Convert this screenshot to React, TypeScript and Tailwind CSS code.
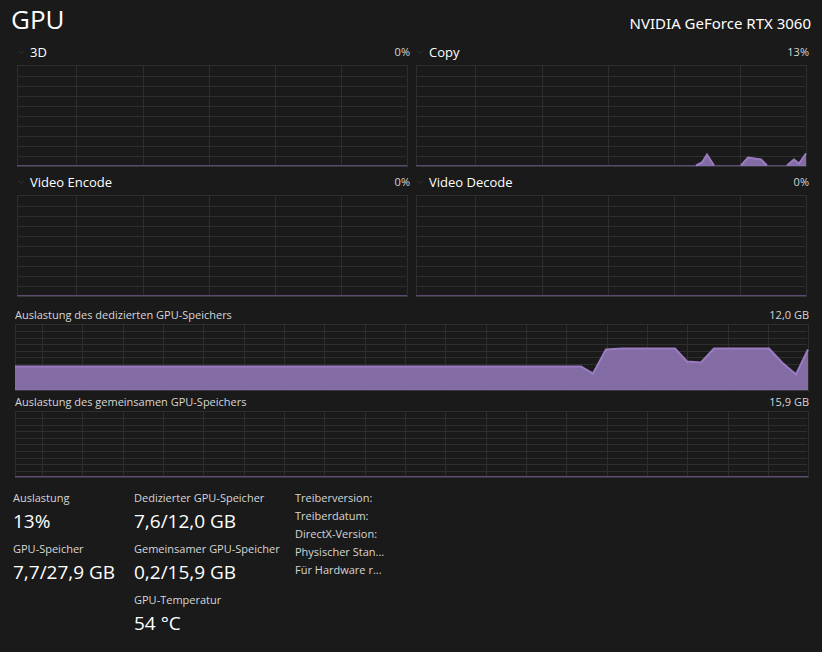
import React from 'react';
import { ChevronDown } from 'lucide-react';

type Point = [number, number];

interface GraphProps {
  width: number;
  height: number;
  columns: number[];
  rows: number[];
  series?: Point[][];
  className: string;
}

const ENGINE_COLUMNS = [59, 126, 192, 258, 324];
const ENGINE_ROWS = [11, 21, 31, 41, 51, 61, 71, 81, 91];

const MEMORY_COLUMNS = Array.from({ length: 19 }, (_, i) => Math.round(27 + i * 40.33));
const MEMORY_ROWS = Array.from({ length: 9 }, (_, i) => Math.ceil((i + 1) * 6.6));

const COPY_SERIES: Point[][] = [
  [[280, 100], [286, 97], [291, 89], [298, 100]],
  [[325, 100], [332, 92], [345, 94], [351, 100]],
  [[371, 100], [378, 94], [383, 98], [390, 88]],
];

const DEDICATED_SERIES: Point[][] = [
  [
    [0, 42], [566, 42], [578, 49], [591, 25], [607, 24], [660, 24], [672, 37],
    [686, 38], [699, 24], [754, 24], [767, 38], [781, 50], [793, 25],
  ],
];

const engines = [
  { name: '3D', value: '0%' },
  { name: 'Copy', value: '13%', series: COPY_SERIES },
  { name: 'Video Encode', value: '0%' },
  { name: 'Video Decode', value: '0%' },
];

const memory = [
  { name: 'Auslastung des dedizierten GPU-Speichers', value: '12,0 GB', series: DEDICATED_SERIES },
  { name: 'Auslastung des gemeinsamen GPU-Speichers', value: '15,9 GB' },
];

const details = [
  'Treiberversion:',
  'Treiberdatum:',
  'DirectX-Version:',
  'Physischer Stan...',
  'Für Hardware r...',
];

const Graph: React.FC<GraphProps> = ({ width, height, columns, rows, series = [], className }) => {
  const base = height - 1;

  return (
    <svg viewBox={`0 0 ${width} ${height}`} preserveAspectRatio="none" className={className} aria-hidden="true">
      <g fill="#2e2e2e">
        {columns.map((x) => (
          <rect key={x} x={x} y={0} width={1} height={height} />
        ))}
        {rows.map((y) => (
          <rect key={y} x={0} y={y} width={width - 2} height={1} />
        ))}
        <rect x={0} y={0} width={width} height={1} />
        <rect x={0} y={0} width={1} height={height} />
        <rect x={width - 1} y={0} width={1} height={height} />
        <rect x={0} y={base} width={width} height={1} fill="#39363d" />
      </g>
      <rect x={0} y={base - 1} width={width - 1} height={1} fill="#5c4c72" />
      {series.map((points, i) => {
        const line = points.map(([x, y]) => `${x},${y + 0.5}`).join(' ');
        const first = points[0][0];
        const last = points[points.length - 1][0];
        return (
          <g key={i}>
            <polygon points={`${first},${base} ${line} ${last},${base}`} fill="#8f74b2" fillOpacity={0.9} />
            <polyline points={line} fill="none" stroke="#9b7cc4" strokeWidth={2} />
          </g>
        );
      })}
    </svg>
  );
};

const Stat: React.FC<{ label: string; value: string }> = ({ label, value }) => (
  <div className="h-[51px]">
    <dt className="text-[11px] leading-[18px] text-[#d6d6d6]">{label}</dt>
    <dd className="text-[19px] leading-[28px] text-white">{value}</dd>
  </div>
);

const App: React.FC = () => {
  return (
    <main className="min-h-screen bg-[#1a1a1a] pb-4 font-['Open_Sans','Noto_Sans',sans-serif] whitespace-nowrap text-white">
      <header className="flex h-[43px] items-start justify-between px-[11px]">
        <h1 className="text-[26px] leading-[38px] font-normal">GPU</h1>
        <p className="pt-3 font-['Noto_Sans',sans-serif] text-[15px] leading-[22px]">NVIDIA GeForce RTX 3060</p>
      </header>

      <section className="grid grid-cols-2 gap-x-[6px] pr-[13px] pl-[17px]">
        {engines.map((engine) => (
          <div key={engine.name} className="h-[130px]">
            <div className="flex h-[22px] items-center justify-between pb-1">
              <button className="flex items-center gap-1 text-[13px] leading-[18px]">
                <ChevronDown size={9} className="text-[#383838]" />
                {engine.name}
              </button>
              <span className="text-[11px] leading-[18px] text-[#d6d6d6]">{engine.value}</span>
            </div>
            <div className="pr-[2px]">
              <Graph
                width={391}
                height={102}
                columns={ENGINE_COLUMNS}
                rows={ENGINE_ROWS}
                series={engine.series}
                className="block h-[102px] w-full"
              />
            </div>
          </div>
        ))}
      </section>

      <section className="pt-1 pr-[13px] pl-[15px]">
        {memory.map((item) => (
          <div key={item.name} className="h-[87px]">
            <div className="flex h-[17px] items-start justify-between text-[11px] leading-[16px] text-[#d6d6d6]">
              <span>{item.name}</span>
              <span>{item.value}</span>
            </div>
            <Graph
              width={794}
              height={67}
              columns={MEMORY_COLUMNS}
              rows={MEMORY_ROWS}
              series={item.series}
              className="block h-[67px] w-full"
            />
          </div>
        ))}
      </section>

      <section className="flex items-start px-[13px] pt-2">
        <dl className="w-[121px]">
          <Stat label="Auslastung" value="13%" />
          <Stat label="GPU-Speicher" value="7,7/27,9 GB" />
        </dl>
        <dl className="w-[161px]">
          <Stat label="Dedizierter GPU-Speicher" value="7,6/12,0 GB" />
          <Stat label="Gemeinsamer GPU-Speicher" value="0,2/15,9 GB" />
          <Stat label="GPU-Temperatur" value="54 °C" />
        </dl>
        <ul className="text-[11px] leading-[18px] text-[#d6d6d6]">
          {details.map((text) => (
            <li key={text}>{text}</li>
          ))}
        </ul>
      </section>
    </main>
  );
};

export default App;
